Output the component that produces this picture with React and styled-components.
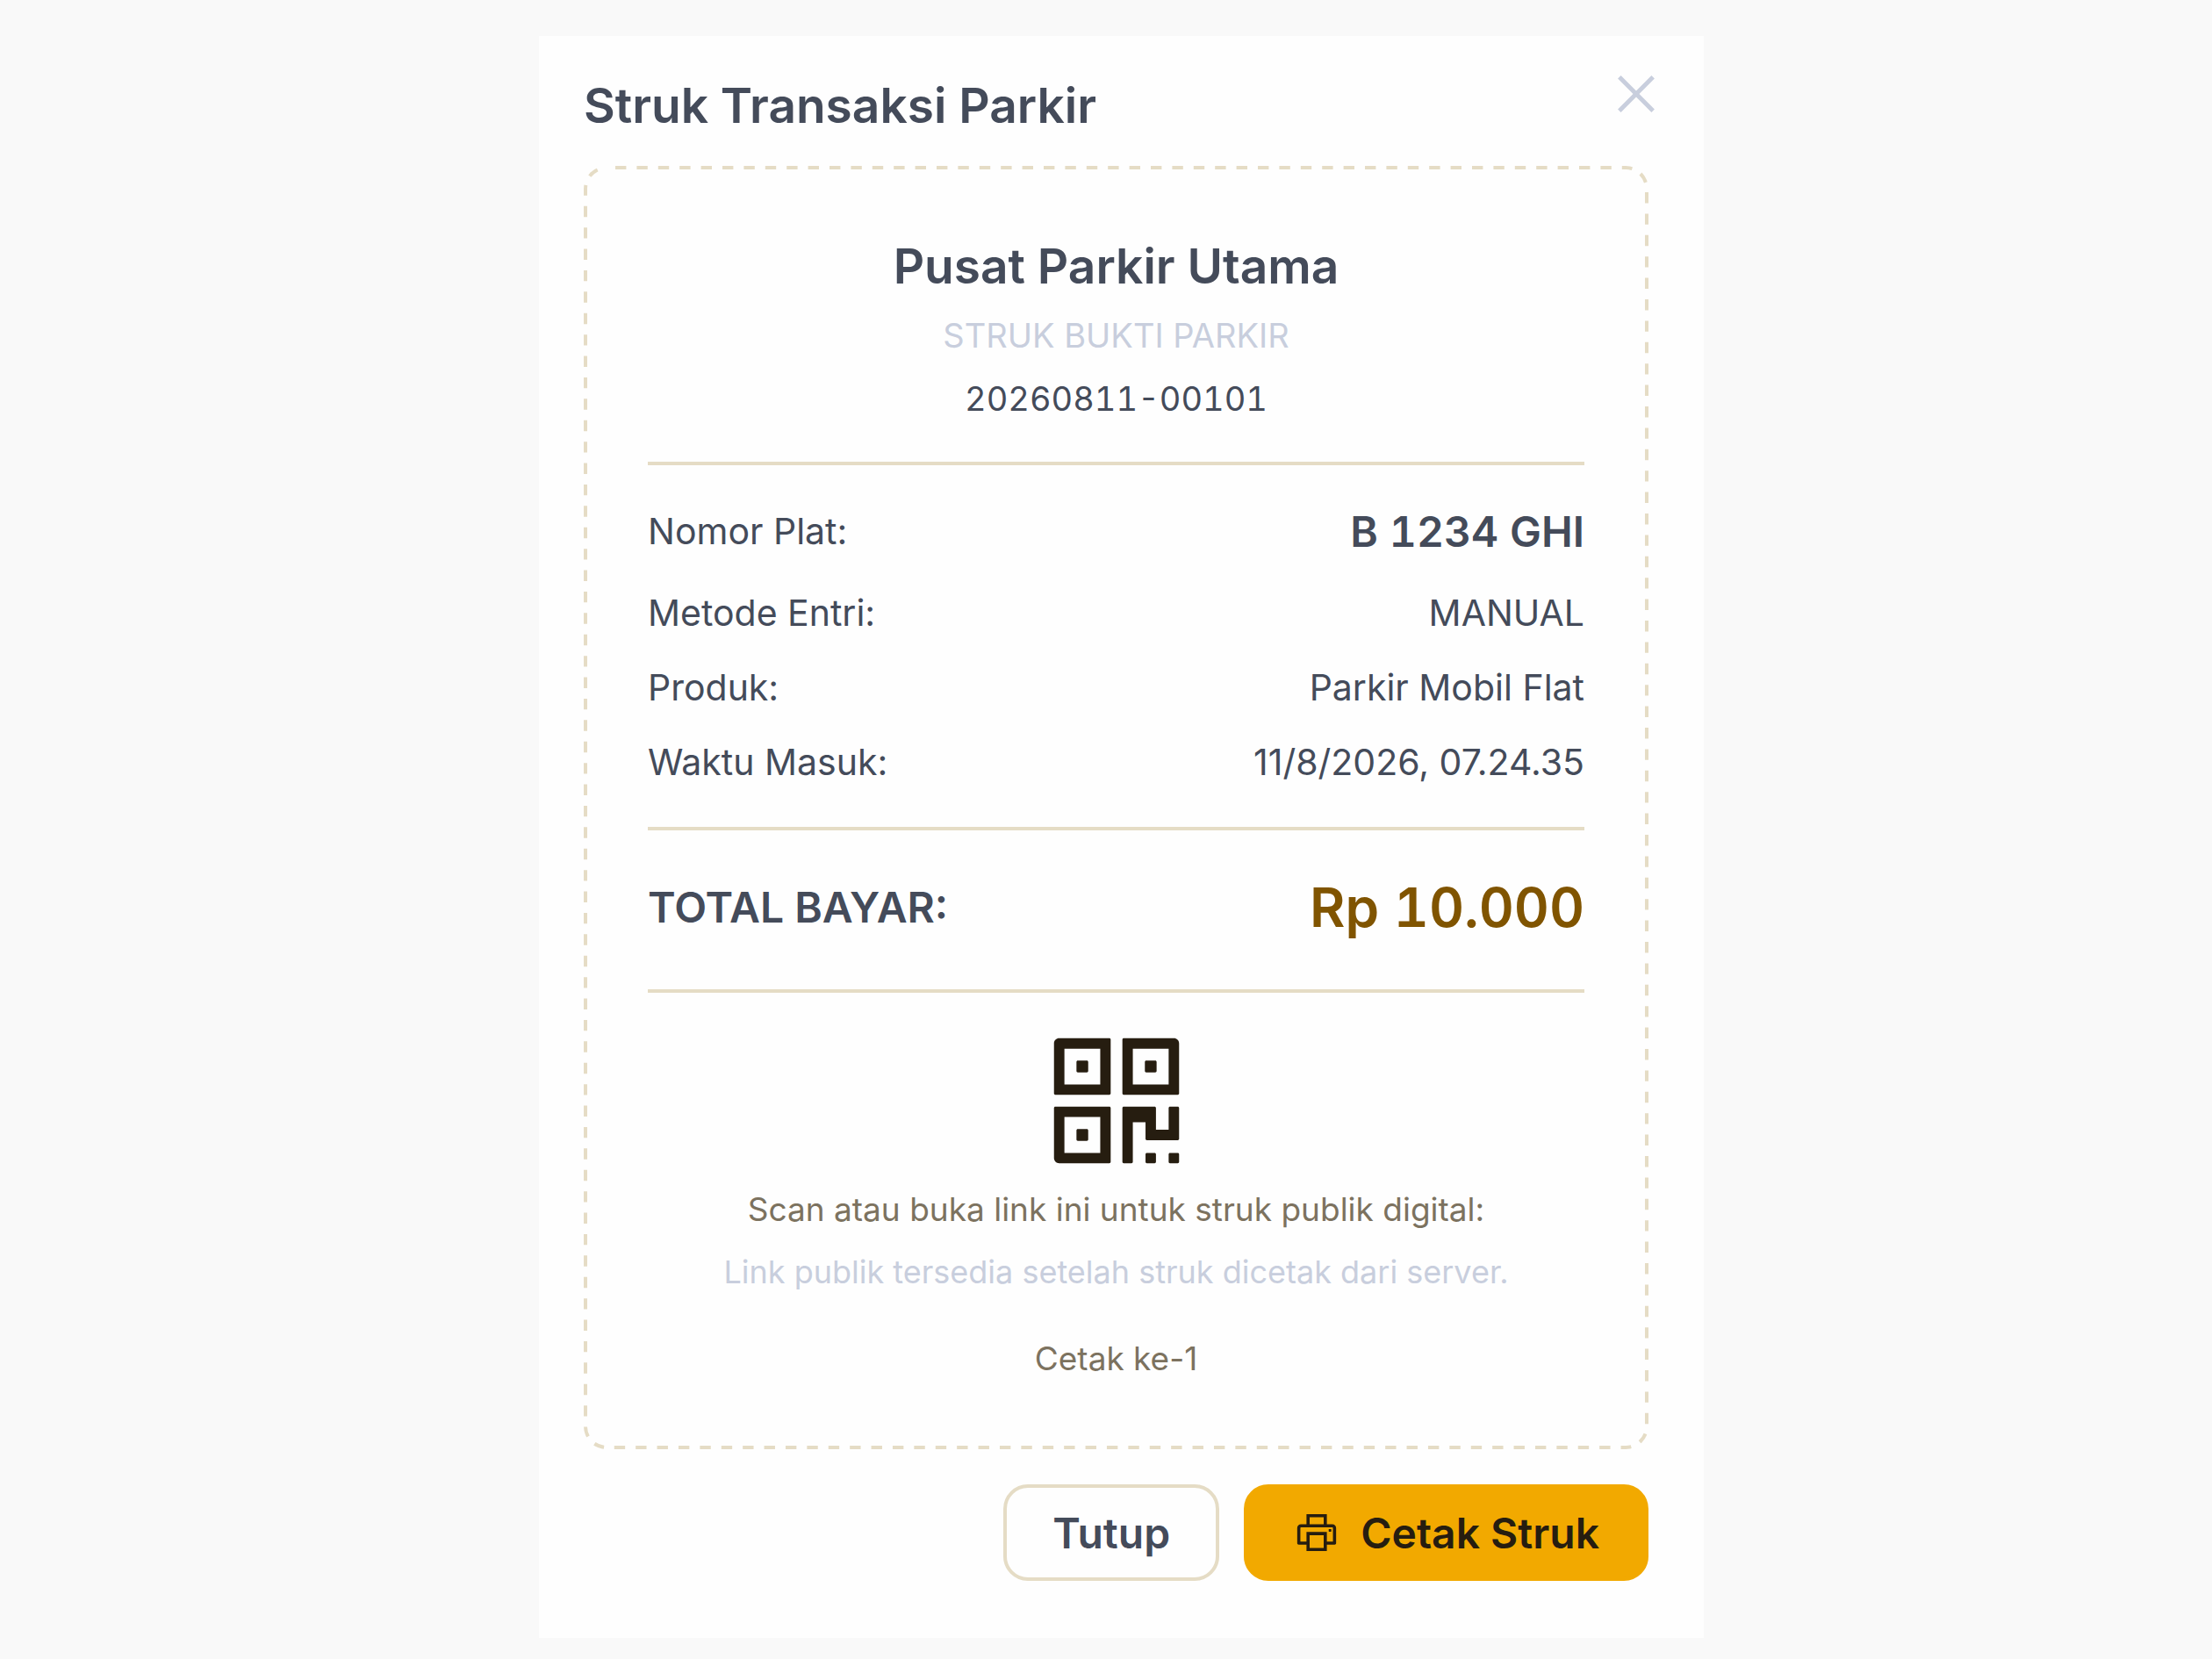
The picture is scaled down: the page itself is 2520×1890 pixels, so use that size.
import React from "react";
import styled, { createGlobalStyle } from "styled-components";
import { AiOutlineClose, AiOutlinePrinter, AiOutlineQrcode } from "react-icons/ai";

const dashes = `<svg xmlns="http://www.w3.org/2000/svg"><rect width="100%" height="100%" rx="26" fill="none" stroke="#e5dcc5" stroke-width="8" stroke-dasharray="12.4 12" stroke-dashoffset="-10"/></svg>`;

function App() {
  const details = [
    { label: "Nomor Plat:", value: "B 1234 GHI", strong: true },
    { label: "Metode Entri:", value: "MANUAL" },
    { label: "Produk:", value: "Parkir Mobil Flat" },
    { label: "Waktu Masuk:", value: "11/8/2026, 07.24.35" },
  ];

  return (
    <Page>
      <GlobalStyle />
      <Modal role="dialog" aria-labelledby="modal-title">
        <Header>
          <Title id="modal-title">Struk Transaksi Parkir</Title>
          <CloseButton type="button" aria-label="Tutup">
            <AiOutlineClose />
          </CloseButton>
        </Header>
        <Receipt>
          <Place>Pusat Parkir Utama</Place>
          <Caption>STRUK BUKTI PARKIR</Caption>
          <Code>20260811-00101</Code>
          <Divider />
          <Details>
            {details.map((i) => (
              <Row key={i.label} $strong={i.strong}>
                <dt>{i.label}</dt>
                <dd>{i.value}</dd>
              </Row>
            ))}
          </Details>
          <Divider />
          <Total>
            <span>TOTAL BAYAR:</span>
            <Amount>Rp 10.000</Amount>
          </Total>
          <Divider />
          <Qr>
            <AiOutlineQrcode />
          </Qr>
          <Note>Scan atau buka link ini untuk struk publik digital:</Note>
          <Note $muted>Link publik tersedia setelah struk dicetak dari server.</Note>
          <PrintCount>Cetak ke-1</PrintCount>
        </Receipt>
        <Footer>
          <Button type="button">Tutup</Button>
          <Button type="button" $primary>
            <AiOutlinePrinter size={54} />
            Cetak Struk
          </Button>
        </Footer>
      </Modal>
    </Page>
  );
}

export default App;

const GlobalStyle = createGlobalStyle`
  * {
    box-sizing: border-box;
  }
  body {
    margin: 0;
    background: #f9f9f9;
    color: #444b5a;
    font-family: Inter, "Liberation Sans", sans-serif;
  }
  h2, h3, p, dl, dd {
    margin: 0;
  }
`;

const Page = styled.main`
  display: flex;
  justify-content: center;
  padding: 41px 0 24px 35px;
`;

const Modal = styled.section`
  width: 100%;
  max-width: 1327px;
  padding: 37px 63px 65px 51px;
  background: #fefefe;
`;

const Header = styled.header`
  display: flex;
  justify-content: space-between;
  align-items: flex-start;
  margin-bottom: 26px;
`;

const Title = styled.h2`
  font-size: 55px;
  line-height: 85px;
  font-weight: 600;
`;

const CloseButton = styled.button`
  display: flex;
  align-items: center;
  justify-content: center;
  width: 62px;
  height: 58px;
  margin-right: -17px;
  padding: 0;
  border: 0;
  background: none;
  color: #c8cedd;
  font-size: 62px;
  cursor: pointer;
`;

const Receipt = styled.div`
  padding: 72px 73px 76px;
  border-radius: 26px;
  background: url('data:image/svg+xml,${encodeURIComponent(dashes)}');
  text-align: center;
`;

const Place = styled.h3`
  font-size: 55px;
  line-height: 85px;
  font-weight: 600;
`;

const Caption = styled.p`
  margin-top: 7px;
  color: #c8cedd;
  font-size: 38px;
  line-height: 58px;
`;

const Code = styled.p`
  margin-top: 13px;
  font-size: 38px;
  line-height: 60px;
  font-variant-numeric: tabular-nums;
`;

const Divider = styled.hr`
  height: 4px;
  margin: 42px 0 0;
  border: 0;
  background: #e5dcc5;
`;

const Details = styled.dl`
  display: flex;
  flex-direction: column;
  gap: 22px;
  padding-top: 35px;
`;

const Row = styled.div`
  display: flex;
  justify-content: space-between;
  align-items: center;
  min-height: ${(p) => (p.$strong ? "80px" : "63px")};
  font-size: 41px;
  line-height: 63px;
  dd {
    font-size: ${(p) => (p.$strong ? "48px" : "41px")};
    font-weight: ${(p) => (p.$strong ? 600 : 400)};
    font-variant-numeric: ${(p) => (p.$strong ? "tabular-nums" : "normal")};
  }
`;

const Total = styled.div`
  display: flex;
  justify-content: space-between;
  align-items: center;
  padding: 40px 0 3px;
  font-size: 48px;
  line-height: 96px;
  font-weight: 600;
`;

const Amount = styled.strong`
  color: #805400;
  font-size: 62px;
  font-weight: 600;
  font-variant-numeric: tabular-nums;
`;

const Qr = styled.div`
  display: flex;
  justify-content: center;
  padding: 28px 0 2px;
  color: #261d10;
  font-size: 190px;
`;

const Note = styled.p`
  margin-bottom: 17px;
  color: ${(p) => (p.$muted ? "#c8cedd" : "#7c725f")};
  font-size: ${(p) => (p.$muted ? "36px" : "37px")};
  line-height: 54px;
`;

const PrintCount = styled(Note)`
  margin: 45px 0 0;
`;

const Footer = styled.footer`
  display: flex;
  justify-content: flex-end;
  gap: 28px;
  margin-top: 40px;
`;

const Button = styled.button`
  display: flex;
  align-items: center;
  gap: 23px;
  height: 110px;
  padding: 0 52px;
  border: 4px solid ${(p) => (p.$primary ? "#f2a900" : "#e5dcc5")};
  border-radius: 28px;
  background: ${(p) => (p.$primary ? "#f2a900" : "#fefefe")};
  color: ${(p) => (p.$primary ? "#261d10" : "#444b5a")};
  font-family: inherit;
  font-size: 48px;
  font-weight: 600;
  cursor: pointer;
`;
